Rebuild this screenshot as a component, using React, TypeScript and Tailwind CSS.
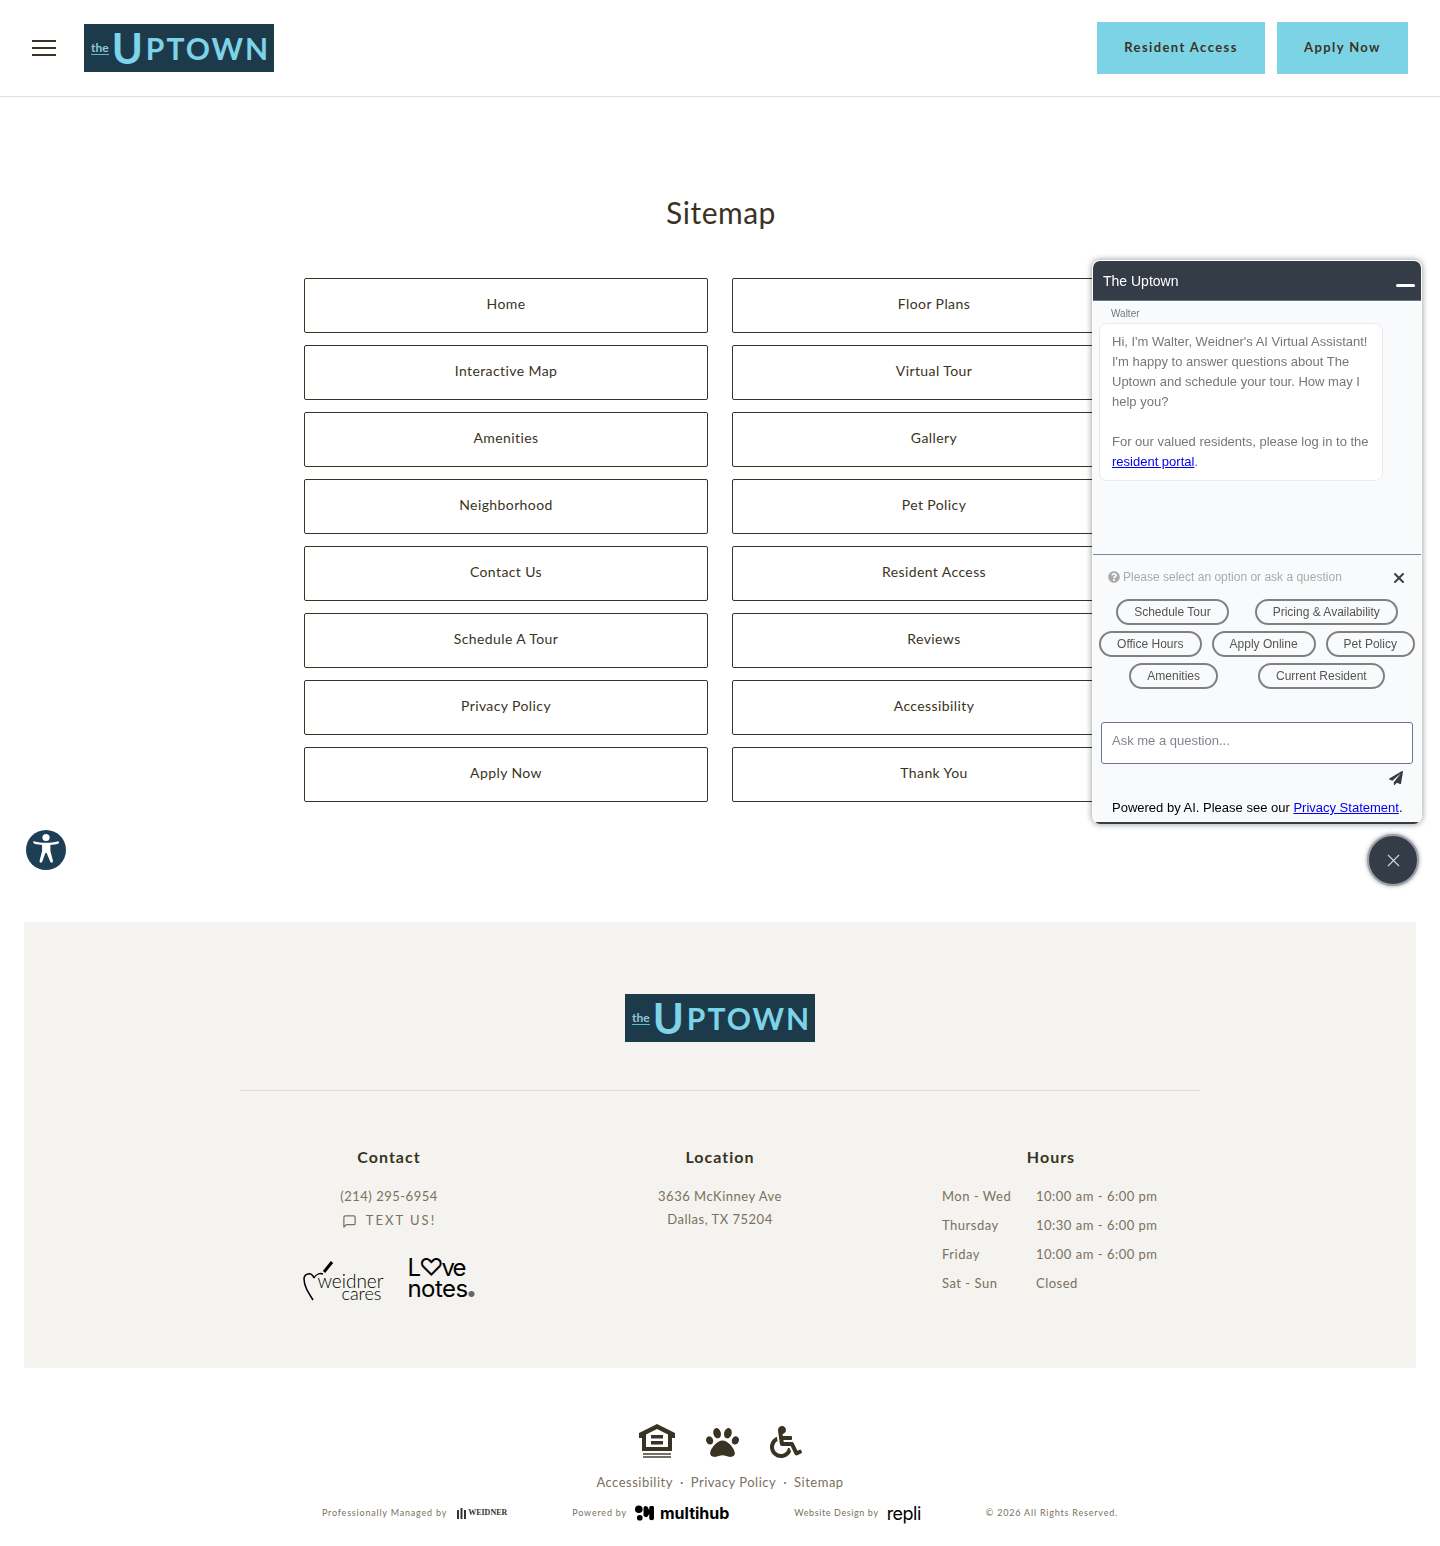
import { FaPaw, FaPaperPlane, FaQuestionCircle, FaWheelchair } from "react-icons/fa"
import { FiMessageSquare } from "react-icons/fi"
import { X } from "lucide-react"

const leftLinks = ["Home", "Interactive Map", "Amenities", "Neighborhood", "Contact Us", "Schedule A Tour", "Privacy Policy", "Apply Now"]
const rightLinks = ["Floor Plans", "Virtual Tour", "Gallery", "Pet Policy", "Resident Access", "Reviews", "Accessibility", "Thank You"]

const hours = [
  { day: "Mon - Wed", time: "10:00 am - 6:00 pm" },
  { day: "Thursday", time: "10:30 am - 6:00 pm" },
  { day: "Friday", time: "10:00 am - 6:00 pm" },
  { day: "Sat - Sun", time: "Closed" },
]

const chipRows = [
  { gap: "gap-[26px]", chips: ["Schedule Tour", "Pricing & Availability"] },
  { gap: "gap-[10px]", chips: ["Office Hours", "Apply Online", "Pet Policy"] },
  { gap: "gap-[40px]", chips: ["Amenities", "Current Resident"] },
]

const Logo = () => (
  <div className="flex h-12 w-[190px] items-center bg-[#1d3a4b] pl-[7px] font-['Lato',sans-serif] text-[#7dd3e8]">
    <span className="mr-[3px] border-b border-[#5db8d0] text-[12px] leading-[13px] font-bold text-[#8fc9d6]">the</span>
    <span className="text-[42px] leading-none font-bold">U</span>
    <span className="ml-[3px] text-[30px] leading-none font-bold tracking-[2px]">PTOWN</span>
  </div>
)

const LinkBox = ({ label }: { label: string }) => (
  <a className="flex h-[55px] items-center justify-center rounded-[2px] border border-[#3a3324] pb-[5px] text-[14px] tracking-[0.4px] text-[#3a3324]">
    {label}
  </a>
)

const Chip = ({ label }: { label: string }) => (
  <span className="flex h-[26px] items-center rounded-full border-2 border-[#808080] px-4 text-[12px] text-[#555]">
    {label}
  </span>
)

const ChatWidget = () => (
  <div className="fixed top-[260px] left-[1092px] flex h-[564px] w-[330px] flex-col overflow-hidden rounded-lg border border-white border-b-0 bg-[#f9fafc] font-['Liberation_Sans',sans-serif] shadow-[0_0_6px_rgba(0,0,0,0.45)]">
    <div className="flex h-10 shrink-0 items-center justify-between border-b border-[#6b7590] bg-[#343c47] pt-[2px] pr-[6px] pl-[10px] text-[14px] text-white">
      The Uptown
      <span className="mt-2 h-[3px] w-[19px] rounded-sm bg-white" />
    </div>
    <div className="h-[254px] shrink-0 border-b border-[#7b85a5] pt-[7px] pl-[6px]">
      <div className="pl-3 text-[10px] leading-3 text-[#777]">Walter</div>
      <div className="mt-[3px] w-[284px] rounded-lg border border-[#e8eaee] bg-white px-3 py-2 text-[13px] leading-5 text-[#777]">
        Hi, I'm Walter, Weidner's AI Virtual Assistant! I'm happy to answer questions about The Uptown and schedule your tour. How may I help you?
        <br />
        <br />
        For our valued residents, please log in to the <span className="text-[#0000ee] underline">resident portal</span>.
      </div>
    </div>
    <div className="flex items-center justify-between pt-[13px] pr-[14px] pl-[15px] text-[12px] leading-[16px] text-[#aaa]">
      <span className="flex items-center gap-[3px]">
        <FaQuestionCircle className="text-[12px]" />
        Please select an option or ask a question
      </span>
      <X className="mt-[2px] size-4 text-[#3a3f45]" strokeWidth={3} />
    </div>
    <div className="mt-[13px] flex flex-col gap-[6px]">
      {chipRows.map((row) => (
        <div key={row.chips[0]} className={`flex justify-center ${row.gap}`}>
          {row.chips.map((chip) => (
            <Chip key={chip} label={chip} />
          ))}
        </div>
      ))}
    </div>
    <div className="mx-2 mt-[33px] flex h-[42px] items-center rounded-[3px] border border-[#6b7590] bg-white px-[10px] pb-1 text-[13px] text-[#808590]">
      Ask me a question...
    </div>
    <div className="mt-[7px] flex justify-end pr-[18px]">
      <FaPaperPlane className="text-[14px] text-[#343c47]" />
    </div>
    <div className="mt-[15px] pl-[19px] text-[13px] leading-[16px] text-black">
      Powered by AI. Please see our <span className="text-[#0000ee] underline">Privacy Statement</span>.
    </div>
    <div className="mt-auto h-[2px] bg-[#343c47]" />
  </div>
)

const HousingIcon = () => (
  <svg viewBox="0 0 36 36" className="h-[36px] w-[36px]" fill="#3a3324">
    <path fillRule="evenodd" d="M18 0 0 9v5h3v13h30V14h3V9ZM7 10.500 18 5l11 5.500V23H7Z" />
    <rect x="12" y="11" width="12" height="3.500" />
    <rect x="12" y="17" width="12" height="3.500" />
    <rect x="4" y="29" width="28" height="2" opacity="0.7" />
    <rect x="4" y="32" width="28" height="2" opacity="0.7" />
  </svg>
)

const AccessButton = () => (
  <div className="fixed top-[830px] left-[26px] flex size-10 items-center justify-center rounded-full bg-[#1d3f56]">
    <svg viewBox="0 0 40 40" className="size-10" fill="#fff">
      <circle cx="20" cy="7.500" r="3.600" />
      <path d="M7 12.500c0-.9.7-1.300 1.500-1.100 3.200.8 7.500 1.400 11.500 1.400s8.300-.6 11.500-1.400c.8-.2 1.500.2 1.500 1.100 0 .7-.4 1.100-1 1.300-2.500.7-5.300 1.100-7.600 1.300v5.900l2.500 9.700c.2 1-.2 1.700-1 1.900-.9.200-1.500-.3-1.700-1.100L20.600 23h-1.200l-3.100 8.500c-.2.800-.8 1.300-1.700 1.100-.8-.2-1.200-.9-1-1.900l2.500-9.700v-5.900c-2.300-.2-5.100-.6-7.600-1.300-.6-.2-1-.6-1-1.300Z" />
    </svg>
  </div>
)

const WeidnerCares = () => (
  <div className="relative h-[42px] w-[82px] font-['Lato',sans-serif] text-black">
    <svg viewBox="0 0 36 42" className="absolute top-0 left-0 h-[42px] w-[36px]" fill="none" stroke="#000" strokeWidth="1.500">
      <path d="M10 40C5 32 1 26 1 19 1 14 8 11 11 18M11 18c2-4 6-5 9-4" />
      <path d="m21 12 8-10" strokeWidth="3" />
    </svg>
    <span className="absolute top-[15px] left-[14px] text-[19px] leading-[12px] font-light">weidner</span>
    <span className="absolute top-[27px] left-[38px] text-[18px] leading-[12px] font-light">cares</span>
  </div>
)

const LoveNotes = () => (
  <div className="flex flex-col font-['Inter',sans-serif] text-[24px] leading-[21px] tracking-[-0.5px] text-black">
    <span className="tracking-[-2px]">L♡ve</span>
    <span>
      notes<span className="text-[8px] text-[#666]">●</span>
    </span>
  </div>
)

const App = () => {
  return (
    <div className="min-h-[1546px] bg-white font-['Lato',sans-serif] text-[#3a3324]">
      <header className="flex h-[97px] items-center border-b border-[#e4e0d8] pr-8 pl-8">
        <button className="flex w-6 flex-col gap-[5px]">
          <span className="h-[2px] bg-[#3a3324]" />
          <span className="h-[2px] bg-[#3a3324]" />
          <span className="h-[2px] bg-[#3a3324]" />
        </button>
        <div className="ml-[28px]">
          <Logo />
        </div>
        <div className="ml-auto flex gap-3">
          <a className="flex h-[52px] w-[168px] items-center justify-center bg-[#7dd3e6] text-[13px] font-bold tracking-[1.400px]">Resident Access</a>
          <a className="flex h-[52px] w-[131px] items-center justify-center bg-[#7dd3e6] text-[13px] font-bold tracking-[1.400px]">Apply Now</a>
        </div>
      </header>

      <main className="pt-24">
        <h1 className="pb-[2px] pl-[2px] text-center text-[30px] leading-[38px] tracking-[0.5px]">Sitemap</h1>
        <div className="mx-auto mt-[45px] grid w-[832px] grid-cols-2 gap-x-6 gap-y-3">
          {leftLinks.map((label, i) => (
            <div key={label} className="contents">
              <LinkBox label={label} />
              <LinkBox label={rightLinks[i]} />
            </div>
          ))}
        </div>
      </main>

      <footer>
        <div className="mx-6 mt-[120px] flex h-[446px] flex-col items-center bg-[#f4f3ef] pt-[72px]">
          <Logo />
          <div className="mt-12 h-px w-[960px] bg-[#e0ddd6]" />
          <div className="mt-[56px] grid w-[960px] grid-cols-[298px_364px_298px] text-[13px] text-[#7a7060]">
            <div className="flex flex-col items-center">
              <h3 className="text-[16px] leading-5 font-bold tracking-[1px] text-[#3a3324]">Contact</h3>
              <div className="mt-[19px] leading-5 tracking-[0.5px]">(214) 295-6954</div>
              <div className="mt-1 flex items-center gap-[9px] leading-5 tracking-[2px]">
                <FiMessageSquare className="mt-[2px] text-[15px]" />
                TEXT US!
              </div>
              <div className="mt-[27px] flex items-center gap-[22px]">
                <WeidnerCares />
                <LoveNotes />
              </div>
            </div>
            <div className="flex flex-col items-center">
              <h3 className="text-[16px] leading-5 font-bold tracking-[1px] text-[#3a3324]">Location</h3>
              <div className="mt-[18px] text-center leading-[23px] tracking-[0.5px]">
                3636 McKinney Ave
                <br />
                Dallas, TX 75204
              </div>
            </div>
            <div className="flex flex-col items-center">
              <h3 className="text-[16px] leading-5 font-bold tracking-[1px] text-[#3a3324]">Hours</h3>
              <div className="mt-[19px] flex flex-col gap-[9px] tracking-[0.5px]">
                {hours.map((row) => (
                  <div key={row.day} className="flex w-[218px] leading-5 whitespace-nowrap">
                    <span className="w-[94px]">{row.day}</span>
                    <span>{row.time}</span>
                  </div>
                ))}
              </div>
            </div>
          </div>
        </div>

        <div className="mt-[56px] flex items-center justify-center gap-[31px]">
          <HousingIcon />
          <FaPaw className="text-[33px]" />
          <FaWheelchair className="text-[32px]" />
        </div>
        <div className="mt-[12px] flex justify-center gap-[7px] text-[13px] leading-5 tracking-[0.5px] text-[#7a7060]">
          <span>Accessibility</span>
          <span>·</span>
          <span>Privacy Policy</span>
          <span>·</span>
          <span>Sitemap</span>
        </div>
        <div className="mt-[11px] flex h-5 items-center justify-center gap-[65px] text-[9px] tracking-[0.8px] text-[#7a7060]">
          <div className="flex items-center gap-[10px]">
            Professionally Managed by
            <span className="flex items-center gap-[2px] font-['Liberation_Serif',serif] text-[8px] leading-none font-bold tracking-normal text-[#333]">
              <svg viewBox="0 0 9 11" className="h-[11px] w-[9px]" fill="#333">
                <rect x="0" y="2" width="2" height="9" />
                <rect x="3.500" y="0" width="2" height="11" />
                <rect x="7" y="2" width="2" height="9" />
              </svg>
              WEIDNER
            </span>
          </div>
          <div className="flex items-center gap-[8px]">
            Powered by
            <span className="flex items-center gap-[6px] font-['Inter',sans-serif] text-[16px] font-bold tracking-normal text-black">
              <svg viewBox="0 0 20 16" className="h-4 w-[19px]" fill="#000">
                <circle cx="4" cy="4" r="4" />
                <circle cx="5" cy="13" r="3" />
                <path d="M9 3c0-3 4-3 5 0l1 2V2c0-2 5-2 5 0v12c0 2-5 2-5 0V9l-2 3c-1 1-3 0-4-1Z" />
              </svg>
              multihub
            </span>
          </div>
          <div className="flex items-center gap-[8px] tracking-[0.6px]">
            Website Design by
            <span className="font-['Inter',sans-serif] text-[18px] tracking-[-0.5px] text-black">repli</span>
          </div>
          <div>© 2026 All Rights Reserved.</div>
        </div>
      </footer>

      <AccessButton />
      <ChatWidget />
      <button className="fixed top-[834px] left-[1367px] flex size-[52px] items-center justify-center rounded-full border-2 border-[#9aa0a8] bg-[#343c47] text-[#d5d8dc] shadow-[0_0_4px_rgba(0,0,0,0.4)]">
        <X className="size-[21px]" strokeWidth={1.300} />
      </button>
    </div>
  )
}

export default App
